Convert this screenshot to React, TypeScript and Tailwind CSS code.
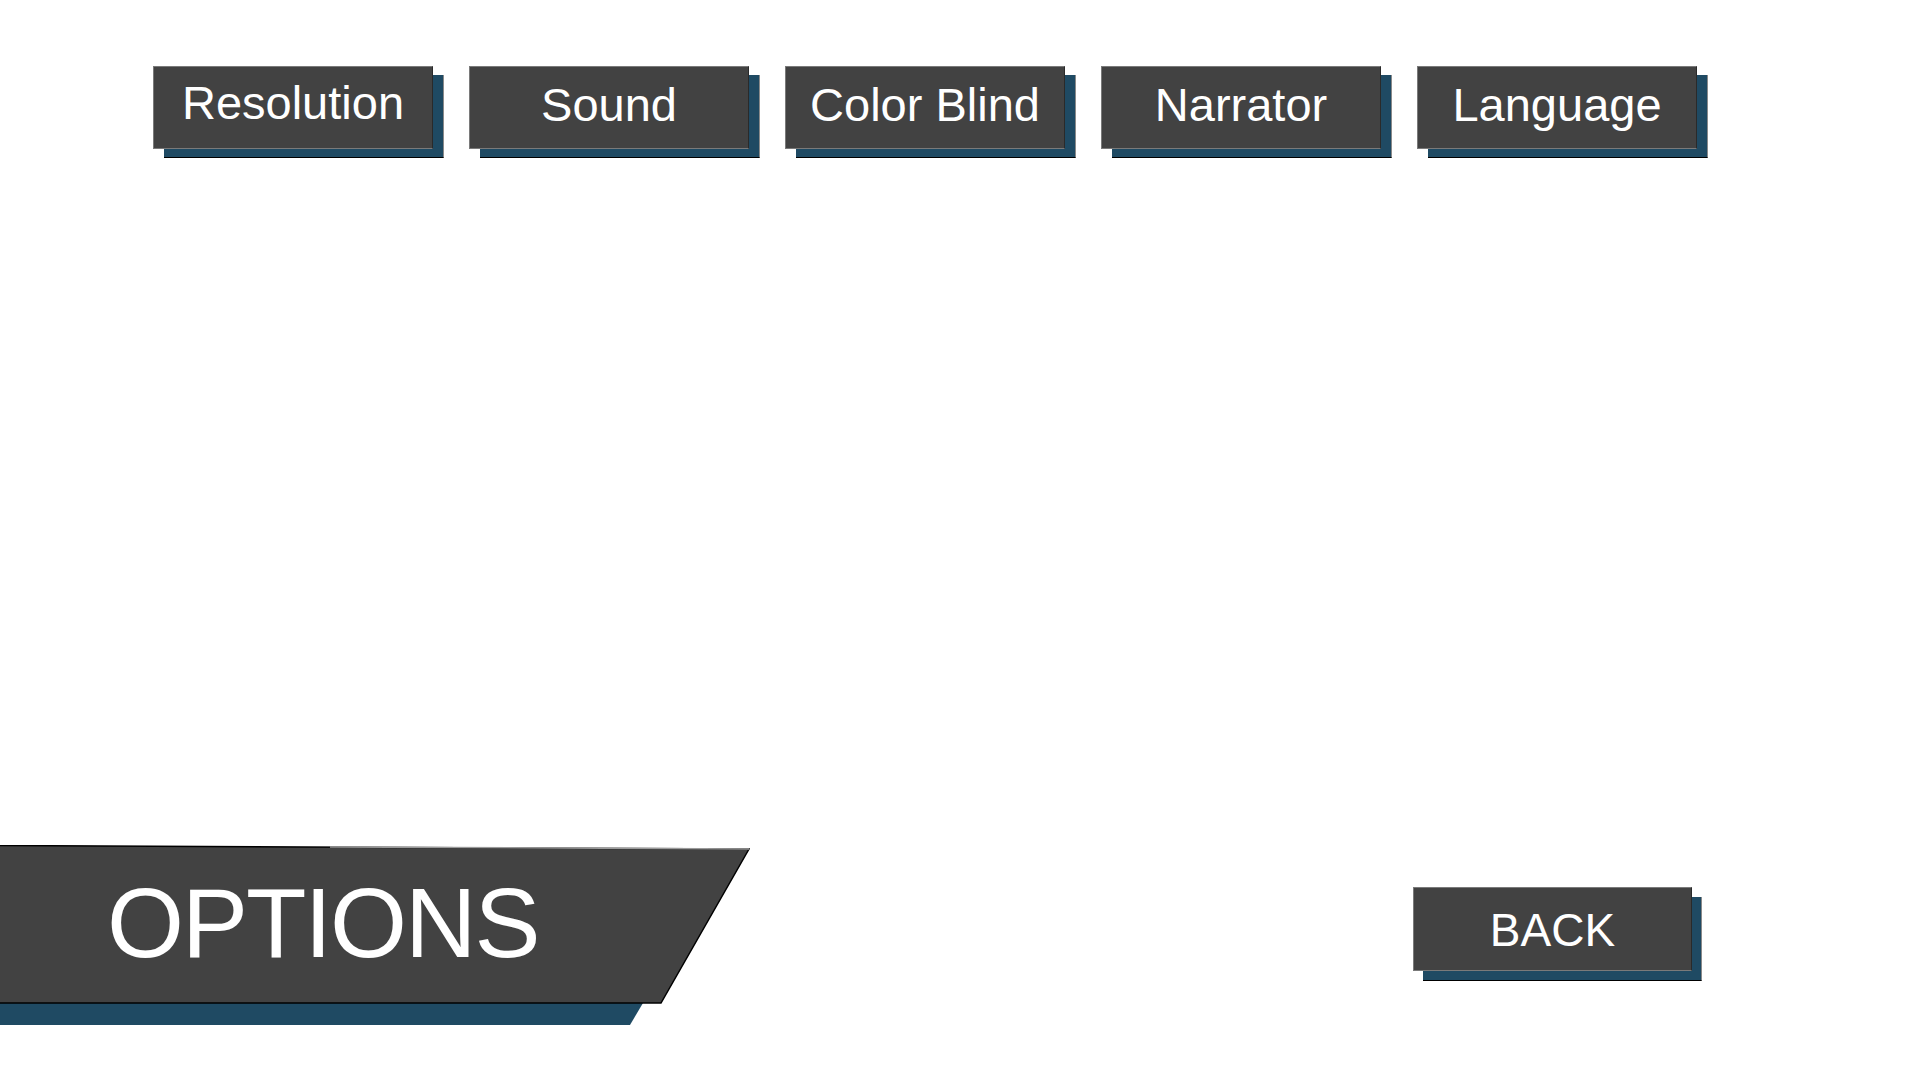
import React from 'react';

const tabs = [
  { label: 'Resolution', lift: 'pb-[10px]' },
  { label: 'Sound', lift: 'pb-[6px]' },
  { label: 'Color Blind', lift: 'pb-[6px]' },
  { label: 'Narrator', lift: 'pb-[6px]' },
  { label: 'Language', lift: 'pb-[6px]' },
];

function MenuButton({ label, lift, className }: { label: string; lift: string; className?: string }) {
  return (
    <div className={`relative w-[280px] h-[83px] ${className ?? ''}`}>
      <div className="absolute left-[11px] top-[9px] w-[280px] h-[83px] bg-[#1f4a63] border-b border-b-black border-r border-r-[#8a8a8a]" />
      <button
        type="button"
        className={`relative w-full h-full flex items-center justify-center bg-[#424242] border border-[#7a7a7a] border-r-[#2a2a2a] text-white text-[47px] leading-none ${lift}`}
      >
        {label}
      </button>
    </div>
  );
}

export default function App() {
  return (
    <div
      className="w-[1920px] h-[1080px] bg-white flex flex-col overflow-hidden"
      style={{ fontFamily: '"Liberation Sans", Arial, sans-serif' }}
    >
      <div className="flex gap-[36px] pl-[153px] pt-[66px]">
        {tabs.map((t) => (
          <MenuButton key={t.label} label={t.label} lift={t.lift} />
        ))}
      </div>

      <div className="mt-auto mb-[55px] flex items-start">
        <div className="relative w-[750px] h-[180px]">
          <svg className="absolute inset-0" width="750" height="180" viewBox="0 0 750 180">
            <polygon points="0,158 643,158 630,180 0,180" fill="#1f4a63" />
            <polygon points="-2,0.5 749,4 661,158 -2,158" fill="#424242" stroke="#000" strokeWidth="1.5" />
            <line x1="330" y1="2" x2="749" y2="4" stroke="#9a9a9a" strokeWidth="1.5" />
          </svg>
          <div className="relative pl-[107px] pt-[28px] text-white text-[99px] leading-none tracking-[-2px]">
            OPTIONS
          </div>
        </div>

        <div className="ml-auto mr-[228px] mt-[42px]">
          <div className="relative w-[279px] h-[84px]">
            <div className="absolute left-[10px] top-[10px] w-[279px] h-[84px] bg-[#1f4a63] border-b border-b-black border-r border-r-[#8a8a8a]" />
            <button
              type="button"
              className="relative w-full h-full flex items-center justify-center bg-[#424242] border border-[#7a7a7a] border-r-[#2a2a2a] text-white text-[46px] leading-none pt-[2px]"
            >
              BACK
            </button>
          </div>
        </div>
      </div>
    </div>
  );
}
